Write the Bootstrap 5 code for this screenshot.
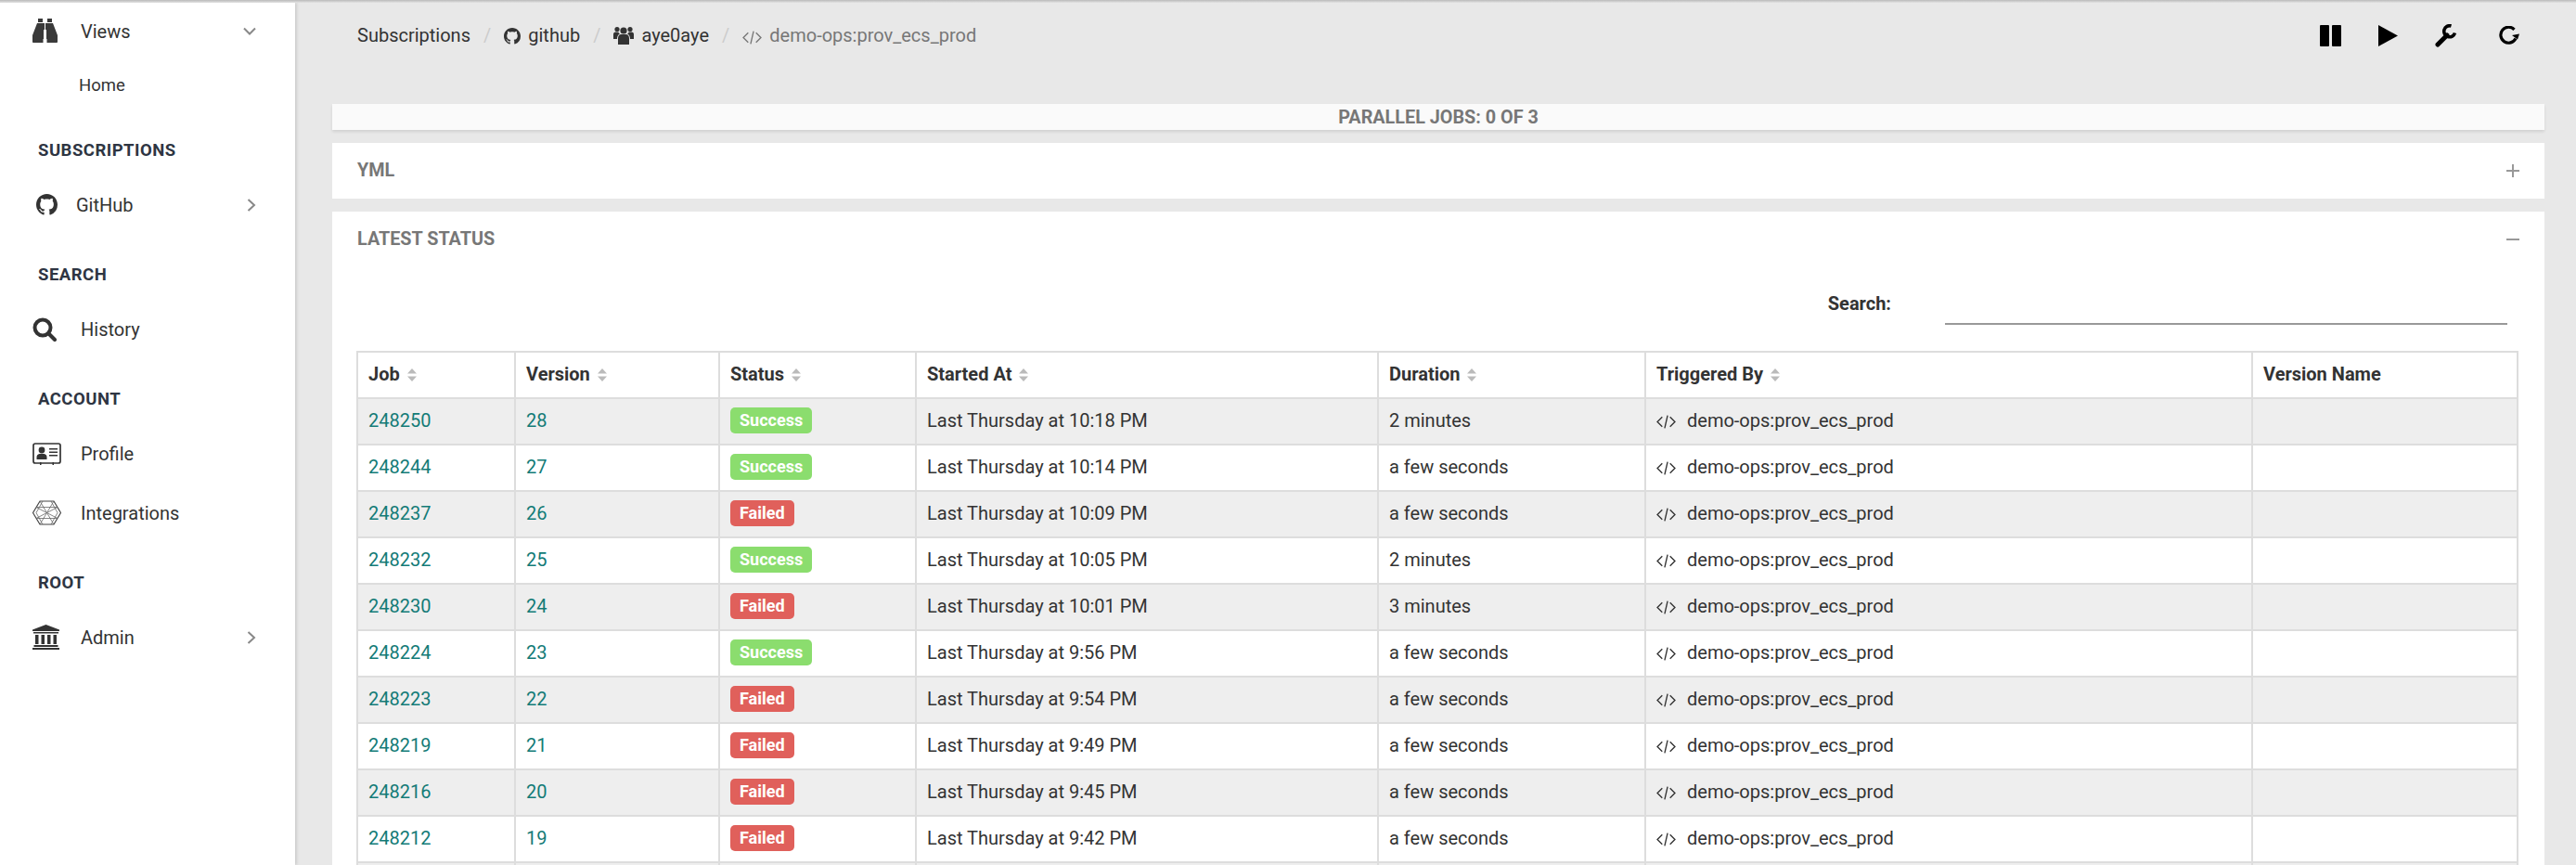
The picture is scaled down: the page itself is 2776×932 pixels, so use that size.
<!DOCTYPE html>
<html lang="en">
<head>
<meta charset="utf-8">
<title>Latest status</title>
<link href="https://cdn.jsdelivr.net/npm/bootstrap@5.3.0/dist/css/bootstrap.min.css" rel="stylesheet">
<style>
html,body{height:932px;overflow:hidden}
body{font-family:Roboto,"Liberation Sans",sans-serif;font-size:20px;color:#333;background:#e8e8e8;line-height:1.4}
.topedge{height:3px;background:linear-gradient(#b9b9b9,#e4e4e4);flex:none}
.shell{height:929px;overflow:hidden}
.sidebar{width:318px;flex:none;background:#fff;box-shadow:2px 0 3px rgba(0,0,0,.12);position:relative}
.snav-item{height:64px;color:#333;padding:0 42px 3px 35px;font-size:20px}
.snav-item .ico{width:52px;flex:none;display:flex;align-items:center}
.snav-item .ico.tight{width:47px}
.snav-sub{height:52px;padding-left:85px;color:#333;font-size:18.5px}
.snav-head{height:40px;margin-top:23px;margin-bottom:7px;padding-left:41px;font-weight:700;font-size:18.5px;color:#2e3542;letter-spacing:.5px}
.snav-head-first{margin-top:24px}
.main-col{min-width:0;height:929px;overflow:hidden}
.crumbrow{height:70px;padding:0 61px 0 67px}
.crumbs{--bs-breadcrumb-margin-bottom:0;--bs-breadcrumb-divider-color:#ccc;--bs-breadcrumb-item-active-color:#777;--bs-breadcrumb-item-padding-x:14px;font-size:20px;flex-wrap:nowrap}
.crumbs a{color:#333;text-decoration:none}
.crumbs svg{vertical-align:-3px}
.toolrow{gap:40px}
.toolrow-last{margin-left:3px}
.panel-wrap{padding:39px 34px 0 40px}
.jobs-bar{height:28px;padding-top:2px;background:#fafafa;box-shadow:0 2px 3px rgba(0,0,0,.1);font-weight:700;font-size:19.8px;color:#777;margin-bottom:14px}
.fold{border:0;border-radius:0;margin-bottom:14px;--bs-card-bg:#fff}
.fold-head{height:60px;padding:0 27px;background:#fff;border:0;border-radius:0!important;font-weight:700;font-size:19.8px;color:#777}
.fold-head.tall{height:59px}
.searchrow{padding:23px 11px 0 0}
.searchrow label{font-weight:700;margin-right:58px;margin-bottom:6px;color:#333}
.searchbox{width:606px;height:40px;border:0;border-bottom:2px solid #999;border-radius:0;padding:0;background:transparent}
.fold-body{padding:0 29px 0 26px}
.runs{table-layout:fixed;width:2328px;margin:28px 0 0;color:#333;--bs-table-striped-bg:#eee;--bs-table-striped-color:#333;--bs-table-border-color:#ddd;--bs-table-color:#333;border-color:#ddd}
.runs>:not(caption)>*>*{border-width:2px;padding:0 11px 2px;height:50px;vertical-align:middle;white-space:nowrap;line-height:1}
.runs>:not(caption)>*{border-width:2px}
.runs th{font-weight:700}
.runs a{color:#137b77;text-decoration:none}
.w-job{width:170px}.w-ver{width:220px}.w-sta{width:212px}.w-sta2{width:498px}.w-dur{width:288px}.w-trg{width:654px}.w-nam{width:286px}
.sorter{margin-left:8px;vertical-align:-1px}
.state{--bs-badge-font-size:18px;--bs-badge-padding-x:10px;--bs-badge-padding-y:0;--bs-badge-border-radius:5px;--bs-badge-font-weight:700;height:28px;line-height:28px;color:#fff;display:inline-block}
.state-ok{background:#8bdd6e}
.state-bad{background:#e0605b}
.codeico{margin-right:12px;vertical-align:-2px}
</style>
</head>
<body>
<svg width="0" height="0" class="d-none" aria-hidden="true">
<symbol id="gh" viewBox="0 0 16 16"><path fill="currentColor" d="M8 0C3.58 0 0 3.58 0 8c0 3.54 2.29 6.53 5.47 7.59.4.07.55-.17.55-.38 0-.19-.01-.82-.01-1.49-2.01.37-2.53-.49-2.69-.94-.09-.23-.48-.94-.82-1.13-.28-.15-.68-.52-.01-.53.63-.01 1.08.58 1.23.82.72 1.21 1.87.87 2.33.66.07-.52.28-.87.51-1.07-1.78-.2-3.64-.89-3.64-3.95 0-.87.31-1.59.82-2.15-.08-.2-.36-1.02.08-2.12 0 0 .67-.21 2.2.82.64-.18 1.32-.27 2-.27.68 0 1.36.09 2 .27 1.53-1.04 2.2-.82 2.2-.82.44 1.1.16 1.92.08 2.12.51.56.82 1.27.82 2.15 0 3.07-1.87 3.75-3.65 3.95.29.25.54.73.54 1.48 0 1.07-.01 1.93-.01 2.2 0 .21.15.46.55.38A8.013 8.013 0 0016 8c0-4.42-3.58-8-8-8z"/></symbol>
<symbol id="code" viewBox="0 0 20 14"><path fill="none" stroke="currentColor" stroke-width="1.3" d="M6 2 1 7l5 5M14 2l5 5-5 5M11.5 .5 8.5 13.5"/></symbol>
<symbol id="sort" viewBox="0 0 10 14"><path fill="#bbb" d="M5 0l5 5.5H0zM5 14l5-5.5H0z"/></symbol>
<symbol id="chevr" viewBox="0 0 10 14"><path fill="none" stroke="#888" stroke-width="2" d="M1.5 1 8 7l-6.500 6"/></symbol>
</svg>

<div class="topedge"></div>
<div class="shell d-flex">
  <aside class="sidebar">
    <div class="snav-item d-flex align-items-center">
      <span class="ico"><svg width="27" height="27" viewBox="0 0 27 27"><path fill="#3a3a3a" d="M6 0h5v4H6zM16 0h5v4h-5zM5 5h7v17h-.5v4H.8Q0 26 0 25v-7ZM22 5h-7v17h.5v4h10.700Q27 26 27 25v-7ZM12 5h1v7h-1zM14 5h1v7h-1z"/></svg></span>
      <span class="flex-grow-1">Views</span>
      <svg width="14" height="10" viewBox="0 0 14 10"><path fill="none" stroke="#888" stroke-width="2" d="M1 1.500l6 6 6-6"/></svg>
    </div>
    <div class="snav-sub d-flex align-items-center">Home</div>
    <div class="snav-head snav-head-first d-flex align-items-center">SUBSCRIPTIONS</div>
    <div class="snav-item d-flex align-items-center">
      <span class="ico tight"><svg width="23" height="23" class="ms-1" color="#333"><use href="#gh"/></svg></span>
      <span class="flex-grow-1">GitHub</span>
      <svg width="10" height="14"><use href="#chevr"/></svg>
    </div>
    <div class="snav-head d-flex align-items-center">SEARCH</div>
    <div class="snav-item d-flex align-items-center">
      <span class="ico"><svg width="26" height="26" viewBox="0 0 26 26"><circle cx="11" cy="11" r="8.500" fill="none" stroke="#333" stroke-width="4"/><path stroke="#333" stroke-width="4" stroke-linecap="round" d="M17.500 17.500 24 24"/></svg></span>
      <span class="flex-grow-1">History</span>
    </div>
    <div class="snav-head d-flex align-items-center">ACCOUNT</div>
    <div class="snav-item d-flex align-items-center">
      <span class="ico"><svg width="31" height="24" viewBox="0 0 31 24"><rect x="1" y="1" width="29" height="21" rx="2" fill="none" stroke="#333" stroke-width="1.700"/><circle cx="10" cy="8" r="3.400" fill="#333"/><path fill="#333" d="M4.500 18v-2.500q0-3 3-3.500h5q3 .5 3 3.500V18zM18 6h9v1.500h-9zM18 9.500h9V11h-9zM18 13h9v1.500h-9zM8 21h1.500v3H8zM21.500 21H23v3h-1.500z"/></svg></span>
      <span class="flex-grow-1">Profile</span>
    </div>
    <div class="snav-item d-flex align-items-center">
      <span class="ico"><svg width="31" height="27" viewBox="0 0 31 27"><path fill="none" stroke="#444" stroke-width="1.200" d="M8 1h15l7.500 12.500L23 26H8L.5 13.500z"/><path fill="none" stroke="#666" stroke-width=".8" d="M8 1l15 25M23 1 8 26M4 7.500l23 12M27 7.500l-23 12M11 1l-7 12.500 7 12.500M20 1l7 12.500L20 26M4 19.500h23M4 7.500h23"/></svg></span>
      <span class="flex-grow-1">Integrations</span>
    </div>
    <div class="snav-head d-flex align-items-center">ROOT</div>
    <div class="snav-item d-flex align-items-center">
      <span class="ico"><svg width="29" height="27" viewBox="0 0 29 27"><path fill="#333" d="M14.500 0 29 5.500V7H0V5.500zM1 8h27v1.500H1zM3 11h3.500v10H3zM9.500 11H13v10H9.500zM16 11h3.500v10H16zM22.500 11H26v10h-3.500zM1.500 22h26v2h-26zM0 25h29v2H0z"/></svg></span>
      <span class="flex-grow-1">Admin</span>
      <svg width="10" height="14"><use href="#chevr"/></svg>
    </div>
  </aside>

  <main class="main-col flex-grow-1">
    <div class="crumbrow d-flex align-items-center justify-content-between">
      <nav aria-label="breadcrumb">
        <ol class="breadcrumb crumbs">
          <li class="breadcrumb-item"><a href="#">Subscriptions</a></li>
          <li class="breadcrumb-item"><a href="#"><svg width="18" height="18" class="me-2" color="#333"><use href="#gh"/></svg>github</a></li>
          <li class="breadcrumb-item"><a href="#"><svg width="22" height="20" viewBox="0 0 22 20" class="me-2"><g fill="#333"><circle cx="11" cy="5" r="3.600"/><circle cx="4" cy="3.500" r="2.600"/><circle cx="18" cy="3.500" r="2.600"/><path d="M5 20v-6.500Q5 9.500 8 9h6q3 .5 3 4.500V20zM0 14V9q0-2.500 2.500-2.500h2.700Q6 8 7 8.500 4 9.500 4 14zM22 14V9q0-2.500-2.500-2.500h-2.700Q16 8 15 8.500q3 1 3 5.500z"/></g></svg>aye0aye</a></li>
          <li class="breadcrumb-item active" aria-current="page"><svg width="21" height="15" class="me-2"><use href="#code"/></svg>demo-ops:prov_ecs_prod</li>
        </ol>
      </nav>
      <div class="toolrow d-flex align-items-center">
        <svg width="23" height="23" viewBox="0 0 23 23"><rect width="10" height="23" rx="1"/><rect x="13" width="10" height="23" rx="1"/></svg>
        <svg width="21" height="23" viewBox="0 0 21 23"><path d="M0 0l21 11.500L0 23z"/></svg>
        <svg width="25" height="25" viewBox="0 0 25 25"><path fill="none" stroke="#000" stroke-width="5" stroke-linecap="round" d="M3 22 13 12"/><path fill="none" stroke="#000" stroke-width="3.600" d="M21.500 9.500a6 6 0 1 1-4-7.500"/></svg>
        <svg class="toolrow-last" width="23" height="21" viewBox="0 0 23 21"><path fill="none" stroke="#000" stroke-width="3.200" d="M17.500 3.800a8.500 8.500 0 1 0 1.500 9.700"/><path d="M23 8.500 21 14.500l-6-4.500z"/></svg>
      </div>
    </div>

    <div class="panel-wrap">
      <div class="jobs-bar d-flex align-items-center justify-content-center">PARALLEL JOBS: 0 OF 3</div>
      <div class="card fold">
        <div class="card-header fold-head d-flex align-items-center justify-content-between">YML
          <svg width="14" height="14" viewBox="0 0 14 14"><path stroke="#999" stroke-width="2" d="M7 0v14M0 7h14"/></svg>
        </div>
      </div>
      <div class="card fold">
        <div class="card-header fold-head tall d-flex align-items-center justify-content-between">LATEST STATUS
          <svg width="14" height="14" viewBox="0 0 14 14"><path stroke="#999" stroke-width="2" d="M0 7h14"/></svg>
        </div>
        <div class="card-body fold-body">
          <div class="searchrow d-flex justify-content-end align-items-center">
            <label for="q">Search:</label>
            <input id="q" class="form-control searchbox" type="search">
          </div>
          <table class="table table-bordered table-striped runs">
            <colgroup><col class="w-job"><col class="w-ver"><col class="w-sta"><col class="w-sta2"><col class="w-dur"><col class="w-trg"><col class="w-nam"></colgroup>
            <thead>
              <tr>
                <th>Job<svg class="sorter" width="10" height="14"><use href="#sort"/></svg></th>
                <th>Version<svg class="sorter" width="10" height="14"><use href="#sort"/></svg></th>
                <th>Status<svg class="sorter" width="10" height="14"><use href="#sort"/></svg></th>
                <th>Started At<svg class="sorter" width="10" height="14"><use href="#sort"/></svg></th>
                <th>Duration<svg class="sorter" width="10" height="14"><use href="#sort"/></svg></th>
                <th>Triggered By<svg class="sorter" width="10" height="14"><use href="#sort"/></svg></th>
                <th>Version Name</th>
              </tr>
            </thead>
            <tbody>
              <tr><td><a href="#">248250</a></td><td><a href="#">28</a></td><td><span class="badge state state-ok">Success</span></td><td>Last Thursday at 10:18 PM</td><td>2 minutes</td><td><svg class="codeico" width="21" height="15"><use href="#code"/></svg>demo-ops:prov_ecs_prod</td><td></td></tr>
              <tr><td><a href="#">248244</a></td><td><a href="#">27</a></td><td><span class="badge state state-ok">Success</span></td><td>Last Thursday at 10:14 PM</td><td>a few seconds</td><td><svg class="codeico" width="21" height="15"><use href="#code"/></svg>demo-ops:prov_ecs_prod</td><td></td></tr>
              <tr><td><a href="#">248237</a></td><td><a href="#">26</a></td><td><span class="badge state state-bad">Failed</span></td><td>Last Thursday at 10:09 PM</td><td>a few seconds</td><td><svg class="codeico" width="21" height="15"><use href="#code"/></svg>demo-ops:prov_ecs_prod</td><td></td></tr>
              <tr><td><a href="#">248232</a></td><td><a href="#">25</a></td><td><span class="badge state state-ok">Success</span></td><td>Last Thursday at 10:05 PM</td><td>2 minutes</td><td><svg class="codeico" width="21" height="15"><use href="#code"/></svg>demo-ops:prov_ecs_prod</td><td></td></tr>
              <tr><td><a href="#">248230</a></td><td><a href="#">24</a></td><td><span class="badge state state-bad">Failed</span></td><td>Last Thursday at 10:01 PM</td><td>3 minutes</td><td><svg class="codeico" width="21" height="15"><use href="#code"/></svg>demo-ops:prov_ecs_prod</td><td></td></tr>
              <tr><td><a href="#">248224</a></td><td><a href="#">23</a></td><td><span class="badge state state-ok">Success</span></td><td>Last Thursday at 9:56 PM</td><td>a few seconds</td><td><svg class="codeico" width="21" height="15"><use href="#code"/></svg>demo-ops:prov_ecs_prod</td><td></td></tr>
              <tr><td><a href="#">248223</a></td><td><a href="#">22</a></td><td><span class="badge state state-bad">Failed</span></td><td>Last Thursday at 9:54 PM</td><td>a few seconds</td><td><svg class="codeico" width="21" height="15"><use href="#code"/></svg>demo-ops:prov_ecs_prod</td><td></td></tr>
              <tr><td><a href="#">248219</a></td><td><a href="#">21</a></td><td><span class="badge state state-bad">Failed</span></td><td>Last Thursday at 9:49 PM</td><td>a few seconds</td><td><svg class="codeico" width="21" height="15"><use href="#code"/></svg>demo-ops:prov_ecs_prod</td><td></td></tr>
              <tr><td><a href="#">248216</a></td><td><a href="#">20</a></td><td><span class="badge state state-bad">Failed</span></td><td>Last Thursday at 9:45 PM</td><td>a few seconds</td><td><svg class="codeico" width="21" height="15"><use href="#code"/></svg>demo-ops:prov_ecs_prod</td><td></td></tr>
              <tr><td><a href="#">248212</a></td><td><a href="#">19</a></td><td><span class="badge state state-bad">Failed</span></td><td>Last Thursday at 9:42 PM</td><td>a few seconds</td><td><svg class="codeico" width="21" height="15"><use href="#code"/></svg>demo-ops:prov_ecs_prod</td><td></td></tr>
              <tr><td></td><td></td><td></td><td></td><td></td><td></td><td></td></tr>
            </tbody>
          </table>
        </div>
      </div>
    </div>
  </main>
</div>
<script src="https://cdn.jsdelivr.net/npm/bootstrap@5.3.0/dist/js/bootstrap.bundle.min.js"></script>
</body>
</html>
